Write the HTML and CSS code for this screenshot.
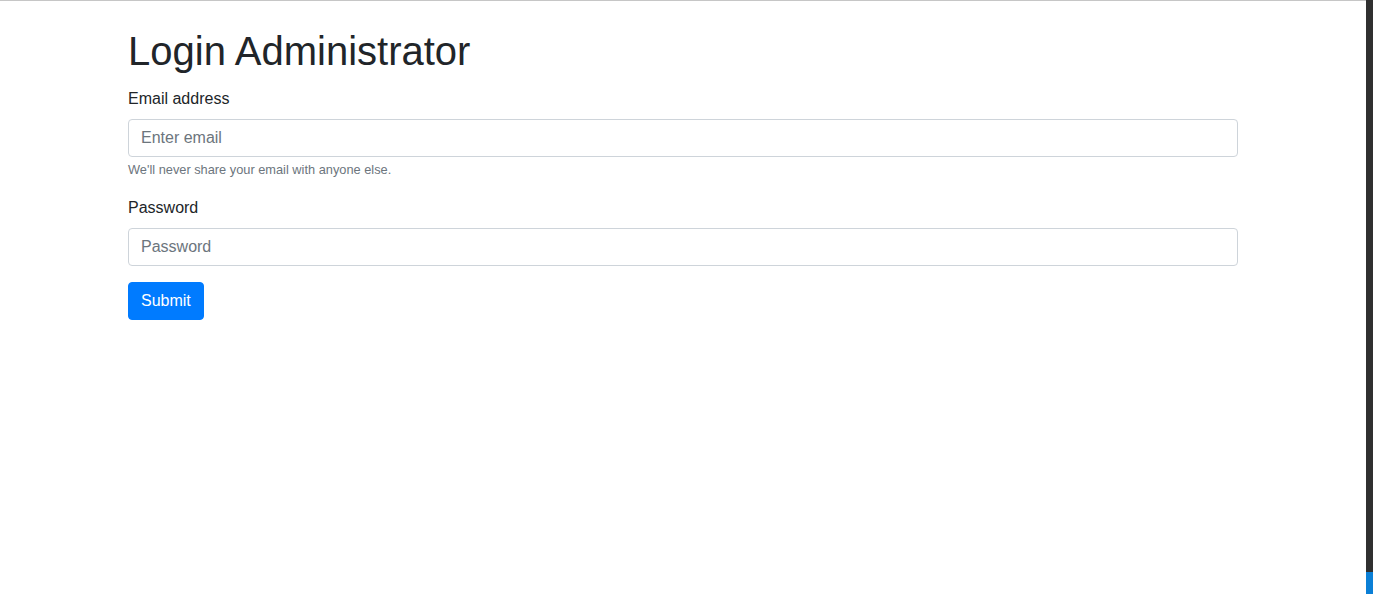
FILE: index.html
```html
<!DOCTYPE html>
<html lang="en">
<head>
<meta charset="utf-8">
<title>Login Administrator</title>
<link rel="stylesheet" href="styles.css">
</head>
<body>
<div class="page">
  <main class="main">
    <div class="container">
      <h1 class="title">Login Administrator</h1>
      <form class="form">
        <div class="form-group">
          <label class="label" for="email">Email address</label>
          <input class="input" id="email" type="email" placeholder="Enter email">
          <small class="help">We'll never share your email with anyone else.</small>
        </div>
        <div class="form-group">
          <label class="label" for="password">Password</label>
          <input class="input" id="password" type="password" placeholder="Password">
        </div>
        <button class="btn" type="submit">Submit</button>
      </form>
    </div>
  </main>
  <aside class="side-strip">
    <div class="strip-dark"></div>
    <div class="strip-blue"></div>
  </aside>
</div>
</body>
</html>
```
FILE: styles.css
```css
* { box-sizing: border-box; }
html, body { margin: 0; padding: 0; height: 100%; }
body {
  font-family: "Liberation Sans", Arial, sans-serif;
  font-size: 16px;
  line-height: 1.5;
  color: #212529;
  background: #fff;
}
.page {
  display: flex;
  height: 594px;
}
.main {
  flex: 1;
  border-top: 1px solid #c6c6c6;
}
.container {
  width: 1140px;
  margin: 0 auto;
  padding: 0 15px;
}
.title {
  margin: 26px 0 12px;
  font-size: 40px;
  font-weight: 500;
  line-height: 1.2;
}
.form-group { margin-bottom: 16px; }
.label {
  display: block;
  margin-bottom: 8px;
}
.input {
  display: block;
  width: 100%;
  height: 38px;
  padding: 6px 12px;
  font: inherit;
  color: #495057;
  border: 1px solid #ced4da;
  border-radius: 4px;
  background: #fff;
}
.input::placeholder { color: #6c757d; opacity: 1; }
.help {
  display: block;
  margin-top: 3px;
  padding-bottom: 1px;
  font-size: 12.8px;
  color: #6c757d;
}
.btn {
  display: inline-block;
  height: 38px;
  padding: 6px 12px;
  font: inherit;
  color: #fff;
  background: #007bff;
  border: 1px solid #007bff;
  border-radius: 4px;
}
.side-strip {
  width: 7px;
  display: flex;
  flex-direction: column;
}
.strip-dark { flex: 1; background: #303030; }
.strip-blue { height: 22px; background: #0a7fd6; }
```
